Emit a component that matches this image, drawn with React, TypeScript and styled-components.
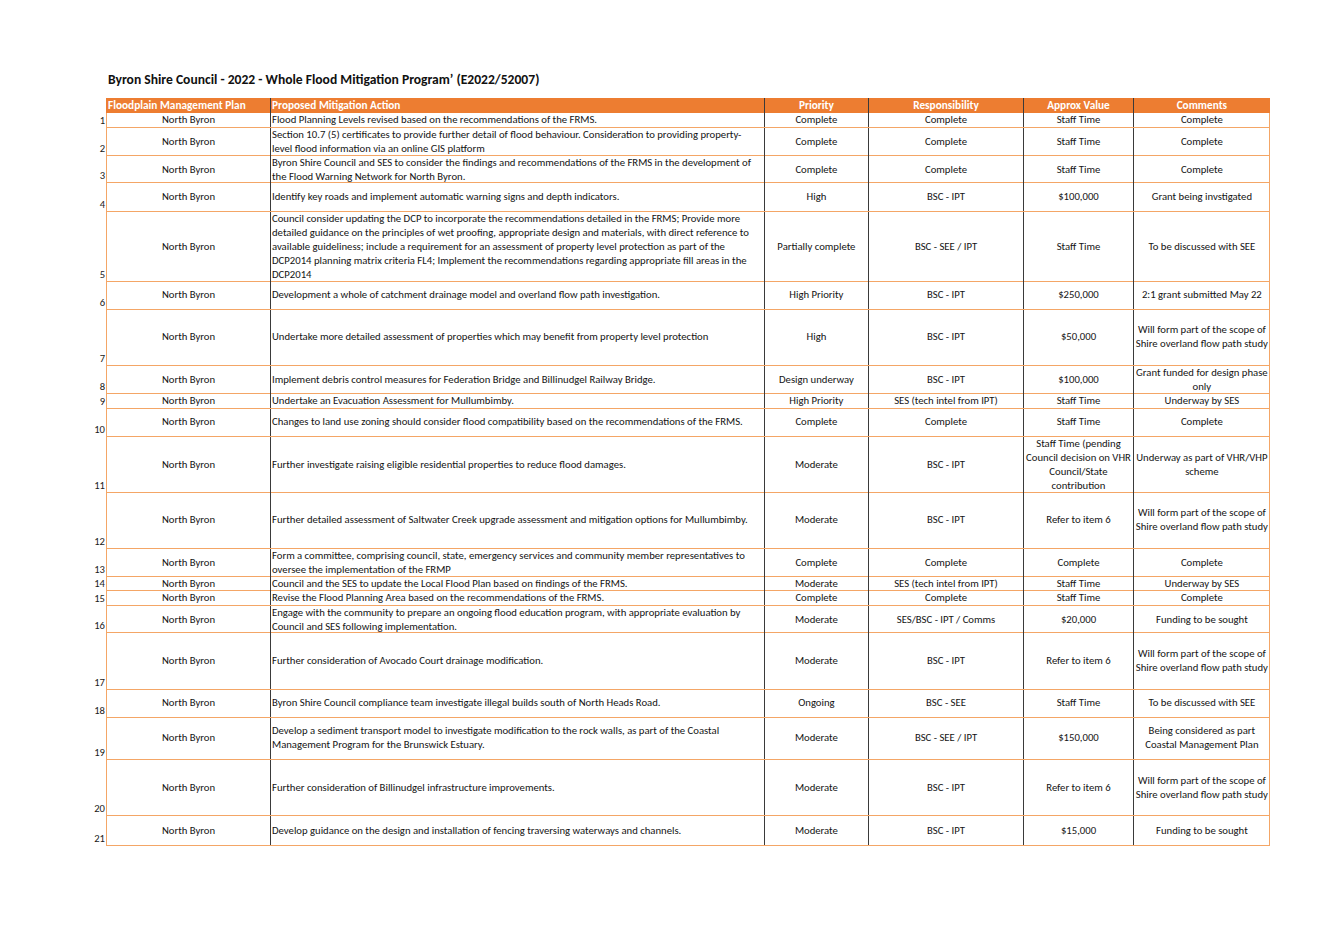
import React from "react";
import styled, { createGlobalStyle } from "styled-components";

const Global = createGlobalStyle`
  html, body { margin: 0; padding: 0; background: #ffffff; }
  body { font-family: Carlito, Lato, "Liberation Sans", sans-serif; color: #141414; }
`;

const FONT = `Carlito, Lato, "Liberation Sans", sans-serif`;
const ORANGE = "#ED7D31";
const LINE = "#F4A666";
const DARK = "#3a3a3a";
const COLS = "163px 493.5px 104.8px 154.4px 110.6px 136.2px";

const Page = styled.div`
  padding: 72px 0 60px 88px;
  font-family: ${FONT};
`;

const Title = styled.h1`
  margin: 0 0 11px 20px;
  font-size: 13.6px;
  line-height: 15px;
  font-weight: 700;
  color: #111;
  font-family: ${FONT};
`;

const Row = styled.div<{ $h: number }>`
  display: flex;
  height: ${(p) => p.$h}px;
`;

const Gutter = styled.div`
  width: 17px;
  flex: none;
  display: flex;
  align-items: flex-end;
  justify-content: flex-end;
  font-size: 10.6px;
  line-height: 15px;
  color: #1a1a1a;
  padding-right: 1px;
`;

const TableRow = styled.div<{ $head?: boolean }>`
  flex: none;
  display: grid;
  grid-template-columns: ${COLS};
  box-sizing: border-box;
  border-left: 1px solid ${(p) => (p.$head ? ORANGE : LINE)};
  border-right: 1px solid ${(p) => (p.$head ? ORANGE : LINE)};
  border-bottom: ${(p) => (p.$head ? "none" : `1px solid ${LINE}`)};
  background: ${(p) => (p.$head ? ORANGE : "#fff")};
`;

const Cell = styled.div<{ $align?: "left" | "center"; $sep?: boolean; $head?: boolean }>`
  box-sizing: border-box;
  display: flex;
  flex-direction: column;
  justify-content: center;
  align-items: ${(p) => (p.$align === "left" ? "flex-start" : "center")};
  padding: ${(p) => (p.$align === "left" ? "0 0 0 1px" : "0")};
  border-left: ${(p) => (p.$sep ? `1px solid ${DARK}` : "none")};
  font-size: ${(p) => (p.$head ? "11.3px" : "10.7px")};
  line-height: ${(p) => (p.$head ? "13px" : "14px")};
  font-weight: ${(p) => (p.$head ? 700 : 400)};
  color: ${(p) => (p.$head ? "#ffffff" : "#141414")};
  white-space: nowrap;
  overflow: visible;
  text-align: center;
`;

const Line = styled.span`
  display: block;
`;

type RowData = {
  n: number;
  h: number;
  action: string[];
  priority: string;
  resp: string;
  value: string[];
  comments: string[];
};

const WILL = ["Will form part of the scope of", "Shire overland flow path study"];

const rows: RowData[] = [
  { n: 1, h: 14.4, action: ["Flood Planning Levels revised based on the recommendations of the FRMS."], priority: "Complete", resp: "Complete", value: ["Staff Time"], comments: ["Complete"] },
  { n: 2, h: 28, action: ["Section 10.7 (5) certificates to provide further detail of flood behaviour. Consideration to providing property-", "level flood information via an online GIS platform"], priority: "Complete", resp: "Complete", value: ["Staff Time"], comments: ["Complete"] },
  { n: 3, h: 27.8, action: ["Byron Shire Council and SES to consider the findings and recommendations of the FRMS in the development of", "the Flood Warning Network for North Byron."], priority: "Complete", resp: "Complete", value: ["Staff Time"], comments: ["Complete"] },
  { n: 4, h: 28.2, action: ["Identify key roads and implement automatic warning signs and depth indicators."], priority: "High", resp: "BSC - IPT", value: ["$100,000"], comments: ["Grant being invstigated"] },
  {
    n: 5,
    h: 70,
    action: [
      "Council consider updating the DCP to incorporate the recommendations detailed in the FRMS; Provide more",
      "detailed guidance on the principles of wet proofing, appropriate design and materials, with direct reference to",
      "available guideliness; include a requirement for an assessment of property level protection as part of the",
      "DCP2014 planning matrix criteria FL4; Implement the recommendations regarding appropriate fill areas in the",
      "DCP2014",
    ],
    priority: "Partially complete",
    resp: "BSC - SEE / IPT",
    value: ["Staff Time"],
    comments: ["To be discussed with SEE"],
  },
  { n: 6, h: 28.3, action: ["Development a whole of catchment drainage model and overland flow path investigation."], priority: "High Priority", resp: "BSC - IPT", value: ["$250,000"], comments: ["2:1 grant submitted May 22"] },
  { n: 7, h: 56, action: ["Undertake more detailed assessment of properties which may benefit from property level protection"], priority: "High", resp: "BSC - IPT", value: ["$50,000"], comments: WILL },
  { n: 8, h: 28.3, action: ["Implement debris control measures for Federation Bridge and Billinudgel Railway Bridge."], priority: "Design underway", resp: "BSC - IPT", value: ["$100,000"], comments: ["Grant funded for design phase", "only"] },
  { n: 9, h: 14.4, action: ["Undertake an Evacuation Assessment for Mullumbimby."], priority: "High Priority", resp: "SES (tech intel from IPT)", value: ["Staff Time"], comments: ["Underway by SES"] },
  { n: 10, h: 28, action: ["Changes to land use zoning should consider flood compatibility based on the recommendations of the FRMS."], priority: "Complete", resp: "Complete", value: ["Staff Time"], comments: ["Complete"] },
  { n: 11, h: 56, action: ["Further investigate raising eligible residential properties to reduce flood damages."], priority: "Moderate", resp: "BSC - IPT", value: ["Staff Time (pending", "Council decision on VHR", "Council/State", "contribution"], comments: ["Underway as part of VHR/VHP", "scheme"] },
  { n: 12, h: 56.3, action: ["Further detailed assessment of Saltwater Creek upgrade assessment and mitigation options for Mullumbimby."], priority: "Moderate", resp: "BSC - IPT", value: ["Refer to item 6"], comments: WILL },
  { n: 13, h: 28, action: ["Form a committee, comprising council, state, emergency services and community member representatives to", "oversee the implementation of the FRMP"], priority: "Complete", resp: "Complete", value: ["Complete"], comments: ["Complete"] },
  { n: 14, h: 14.3, action: ["Council and the SES to update the Local Flood Plan based on findings of the FRMS."], priority: "Moderate", resp: "SES (tech intel from IPT)", value: ["Staff Time"], comments: ["Underway by SES"] },
  { n: 15, h: 14.3, action: ["Revise the Flood Planning Area based on the recommendations of the FRMS."], priority: "Complete", resp: "Complete", value: ["Staff Time"], comments: ["Complete"] },
  { n: 16, h: 27.7, action: ["Engage with the community to prepare an ongoing flood education program, with appropriate evaluation by", "Council and SES following implementation."], priority: "Moderate", resp: "SES/BSC - IPT / Comms", value: ["$20,000"], comments: ["Funding to be sought"] },
  { n: 17, h: 56.3, action: ["Further consideration of Avocado Court drainage modification."], priority: "Moderate", resp: "BSC - IPT", value: ["Refer to item 6"], comments: WILL },
  { n: 18, h: 28, action: ["Byron Shire Council compliance team investigate illegal builds south of North Heads Road."], priority: "Ongoing", resp: "BSC - SEE", value: ["Staff Time"], comments: ["To be discussed with SEE"] },
  { n: 19, h: 42.7, action: ["Develop a sediment transport model to investigate modification to the rock walls, as part of the Coastal", "Management Program for the Brunswick Estuary."], priority: "Moderate", resp: "BSC - SEE / IPT", value: ["$150,000"], comments: ["Being considered as part", "Coastal Management Plan"] },
  { n: 20, h: 56, action: ["Further consideration of Billinudgel infrastructure improvements."], priority: "Moderate", resp: "BSC - IPT", value: ["Refer to item 6"], comments: WILL },
  { n: 21, h: 29.7, action: ["Develop guidance on the design and installation of fencing traversing waterways and channels."], priority: "Moderate", resp: "BSC - IPT", value: ["$15,000"], comments: ["Funding to be sought"] },
];

const Lines = ({ items }: { items: string[] }) => (
  <>
    {items.map((t, i) => (
      <Line key={i}>{t}</Line>
    ))}
  </>
);

export default function App() {
  return (
    <Page>
      <Global />
      <Title>Byron Shire Council - 2022 - Whole Flood Mitigation Program’ (E2022/52007)</Title>
      <Row $h={15.3}>
        <Gutter />
        <TableRow $head>
          <Cell $head $align="left">Floodplain Management Plan</Cell>
          <Cell $head $sep $align="left">Proposed Mitigation Action</Cell>
          <Cell $head $sep>Priority</Cell>
          <Cell $head $sep>Responsibility</Cell>
          <Cell $head $sep>Approx Value</Cell>
          <Cell $head $sep>Comments</Cell>
        </TableRow>
      </Row>
      {rows.map((r) => (
        <Row key={r.n} $h={r.h}>
          <Gutter>{r.n}</Gutter>
          <TableRow>
            <Cell>North Byron</Cell>
            <Cell $sep $align="left">
              <Lines items={r.action} />
            </Cell>
            <Cell $sep>{r.priority}</Cell>
            <Cell $sep>{r.resp}</Cell>
            <Cell $sep>
              <Lines items={r.value} />
            </Cell>
            <Cell $sep>
              <Lines items={r.comments} />
            </Cell>
          </TableRow>
        </Row>
      ))}
    </Page>
  );
}
